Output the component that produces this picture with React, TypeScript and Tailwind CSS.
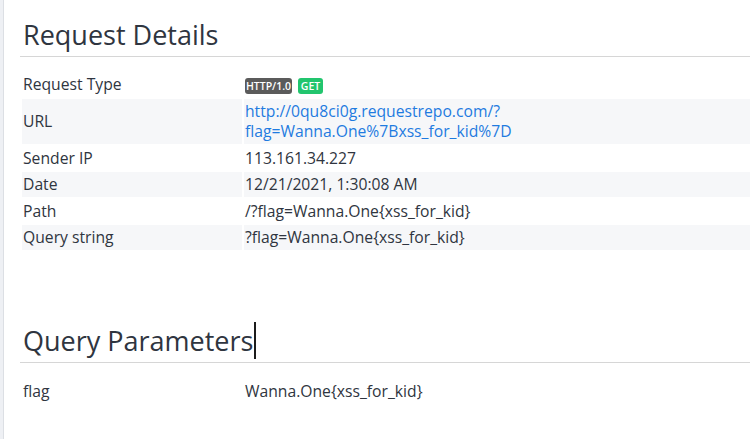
import React from "react";

const rows: { label: string; value: React.ReactNode }[] = [
  {
    label: "Request Type",
    value: (
      <div className="flex h-[20.5px] items-end gap-[6px] pb-[1px]">
        <span className="h-[16px] w-[47px] rounded-[3px] bg-[#5b5b5b] text-center text-[10.5px] font-semibold leading-[16px] text-white">
          HTTP/1.0
        </span>
        <span className="h-[16px] w-[25px] rounded-[3px] bg-[#22c56e] text-center text-[10.5px] font-semibold leading-[16px] text-white">
          GET
        </span>
      </div>
    ),
  },
  {
    label: "URL",
    value: (
      <a className="text-[#1f7be0]" href="#">
        http://0qu8ci0g.requestrepo.com/?
        <br />
        flag=Wanna.One%7Bxss_for_kid%7D
      </a>
    ),
  },
  { label: "Sender IP", value: "113.161.34.227" },
  { label: "Date", value: "12/21/2021, 1:30:08 AM" },
  { label: "Path", value: "/?flag=Wanna.One{xss_for_kid}" },
  { label: "Query string", value: "?flag=Wanna.One{xss_for_kid}" },
];

export default function App() {
  return (
    <div
      className="flex h-[439px] w-[750px] overflow-hidden bg-white text-[#2f3540]"
      style={{ fontFamily: '"Open Sans", "Liberation Sans", sans-serif' }}
    >
      <div className="w-[4px] shrink-0 border-r border-[#dcdfe4] bg-[#eef0f4]" />
      <main className="ml-[16px] w-[740px] shrink-0">
        <h2 className="border-b border-[#d6d6d6] pt-[18px] pb-[4px] pl-[3px] text-[27px] font-normal leading-[33.6px]">
          Request Details
        </h2>
        <table className="mt-[13.5px] w-full border-separate border-spacing-[2px] text-[15.7px] leading-[20.5px]">
          <tbody>
            {rows.map((r, i) => (
              <tr key={r.label} className={i % 2 === 1 ? "bg-[#f6f7f9]" : ""}>
                <td className="w-[220px] py-[2px] pl-[1px] align-middle">{r.label}</td>
                <td className="py-[2px] pl-[1px] align-middle">{r.value}</td>
              </tr>
            ))}
          </tbody>
        </table>

        <h2 className="mt-[72px] border-b border-[#d6d6d6] pb-[5px] pl-[3px] text-[27px] font-normal leading-[33.6px]">
          Query Parameters
          <span className="relative inline-block w-[2px] align-baseline">
            <span className="absolute bottom-[-8px] left-[1px] h-[37px] w-[2px] bg-[#1c1c1c]" />
          </span>
        </h2>
        <table className="mt-[13.5px] w-full border-separate border-spacing-[2px] text-[15.7px] leading-[20.5px]">
          <tbody>
            <tr>
              <td className="w-[220px] py-[2px] pl-[1px] align-middle">flag</td>
              <td className="py-[2px] pl-[1px] align-middle">Wanna.One{"{"}xss_for_kid{"}"}</td>
            </tr>
          </tbody>
        </table>
      </main>
    </div>
  );
}
